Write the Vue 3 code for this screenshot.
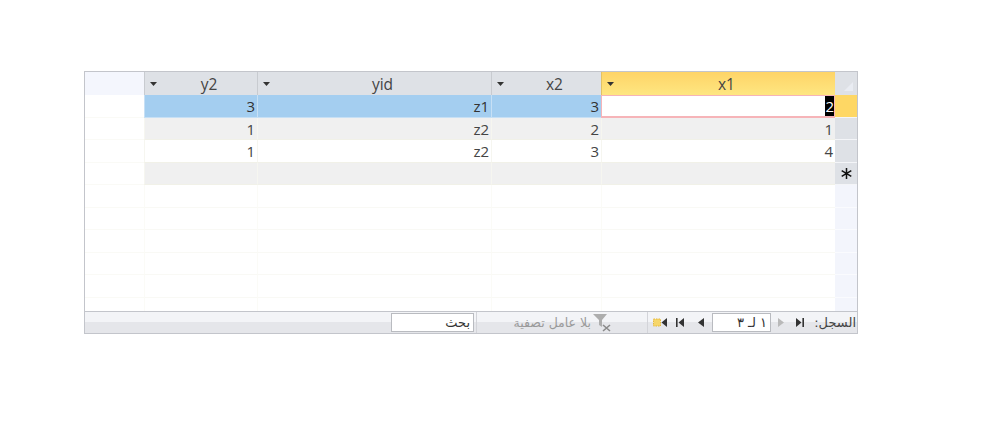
<script setup>
const columns = [
  { key: 'y2', label: 'y2' },
  { key: 'yid', label: 'yid' },
  { key: 'x2', label: 'x2' },
  { key: 'x1', label: 'x1' },
]
const rows = [
  { y2: '3', yid: 'z1', x2: '3', x1: '2', state: 'current' },
  { y2: '1', yid: 'z2', x2: '2', x1: '1', state: 'alt' },
  { y2: '1', yid: 'z2', x2: '3', x1: '4', state: 'plain' },
  { y2: '', yid: '', x2: '', x1: '', state: 'new' },
]
const emptyRows = [1, 2, 3, 4, 5, 6]
</script>

<template>
  <div class="page">
    <div class="sheet">
      <div class="grid">
        <div class="corner"></div>
        <div
          v-for="col in columns"
          :key="col.key"
          class="head"
          :class="{ active: col.key === 'x1' }"
        >
          <svg class="caret" width="7" height="4" viewBox="0 0 7 4"><path d="M0 0h7L3.500 4z" fill="#333" /></svg>
          <span>{{ col.label }}</span>
        </div>
        <div class="head sel-head">
          <svg width="9" height="9" viewBox="0 0 9 9"><path d="M9 0v9H0z" fill="#e9ecf2" /></svg>
        </div>

        <template v-for="(row, i) in rows" :key="i">
          <div class="blank"></div>
          <div
            v-for="col in columns"
            :key="col.key"
            class="cell"
            :class="[row.state, { editing: row.state === 'current' && col.key === 'x1' }]"
          >
            <mark v-if="row.state === 'current' && col.key === 'x1'">{{ row[col.key] }}</mark>
            <template v-else>{{ row[col.key] }}</template>
          </div>
          <div class="selector" :class="row.state">
            <svg v-if="row.state === 'new'" width="11" height="11" viewBox="0 0 11 11">
              <path d="M5.500 0v11M0.700 2.700l9.600 5.600M10.300 2.700L0.700 8.300" stroke="#111" stroke-width="1.500" fill="none" />
            </svg>
          </div>
        </template>

        <template v-for="r in emptyRows" :key="r">
          <div class="blank"></div>
          <div v-for="col in columns" :key="col.key" class="empty"></div>
          <div class="side"></div>
        </template>
      </div>

      <div class="status">
        <input class="search" dir="rtl" value="بحث" aria-label="بحث" />
        <div class="filter">
          <span class="filter-text">بلا عامل تصفية</span>
          <svg width="20" height="19" viewBox="0 0 20 19">
            <path d="M0 1h14L9 7v7L6 12V7z" fill="#adadad" />
            <path d="M10 12l7 6M17 12l-7 6" stroke="#8a8a8a" stroke-width="1.600" fill="none" />
          </svg>
        </div>
        <div class="nav">
          <svg class="new-icon" width="15" height="9" viewBox="0 0 15 9">
            <rect x="0.500" y="1" width="7" height="7" fill="#f6d66a" stroke="#e6b93a" stroke-dasharray="1.500 1" />
            <path d="M14 0v9L8.500 4.500z" fill="#333" />
          </svg>
          <svg class="ico" width="8" height="9" viewBox="0 0 8 9"><path d="M0 0h1.600v9H0zM8 0v9L2.500 4.500z" fill="#333" /></svg>
          <svg class="ico prev" width="6" height="9" viewBox="0 0 6 9"><path d="M6 0v9L0 4.500z" fill="#333" /></svg>
          <input class="pos" dir="rtl" value="١ لـ ٣" aria-label="١ لـ ٣" />
          <svg class="ico next" width="6" height="9" viewBox="0 0 6 9"><path d="M0 0v9L6 4.500z" fill="#b9b9b9" /></svg>
          <svg class="ico first" width="8" height="9" viewBox="0 0 8 9"><path d="M0 0v9L5.500 4.500zM6.400 0H8v9H6.400z" fill="#333" /></svg>
          <span class="record" dir="rtl">السجل:</span>
        </div>
      </div>
    </div>
  </div>
</template>

<style>
html, body { margin: 0; background: #fff; }
</style>

<style scoped>
.page {
  width: 1000px;
  height: 427px;
  padding: 71px 0 0 84px;
  box-sizing: border-box;
  background: #fff;
  font-family: "Open Sans", Lato, sans-serif;
  overflow: hidden;
}
.sheet {
  width: 774px;
  height: 263px;
  box-sizing: border-box;
  border: 1px solid #c3c5cb;
  display: flex;
  flex-direction: column;
}
.grid {
  flex: 1;
  min-height: 0;
  overflow: hidden;
  display: grid;
  grid-template-columns: 59px 113px 234px 110px 234px 22px;
  grid-template-rows: 23px repeat(10, 22.5px);
  background: #fff;
}
.corner { background: #f4f6fd; }
.head {
  position: relative;
  background: #dee1e6;
  color: #444;
  font-size: 15.500px;
  padding-left: 16px;
  display: flex;
  align-items: center;
  justify-content: center;
  box-sizing: border-box;
  border-left: 1px solid #c8cbd0;
}
.head.active {
  background: linear-gradient(#fed467, #fee681);
  border-left-color: #e2c266;
}
.caret { position: absolute; left: 5px; top: 10px; }
.sel-head {
  border-left: 0;
  align-items: flex-end;
  justify-content: flex-end;
  padding: 0 4px 4px 0;
}
.blank { border-bottom: 1px solid #fafaf6; box-sizing: border-box; }
.cell {
  box-sizing: border-box;
  text-align: right;
  padding: 1px 2px 0 0;
  font-size: 15px;
  line-height: 20px;
  color: #444;
  border-left: 1px solid #f6f6f0;
  border-bottom: 1px solid #f1f1e8;
  background: #fff;
}
.cell.current {
  background: #a4cef0;
  color: #333;
  border-left-color: #c7e0f5;
  border-bottom-color: #c7e0f5;
}
.cell.alt, .cell.new { background: #f0f0f0; }
.cell.editing {
  background: #fff;
  border: 1px solid #f6b4b8;
  border-bottom-width: 2px;
  padding: 0;
}
mark { background: #000; color: #fff; padding: 0; }
.selector {
  box-sizing: border-box;
  background: #dee1e6;
  border-bottom: 1px solid #f4f5f8;
  display: flex;
  align-items: center;
  justify-content: center;
}
.selector.current { background: #fed764; }
.empty {
  box-sizing: border-box;
  border-left: 1px solid #fbfbf7;
  border-bottom: 1px solid #f9f9f5;
}
.side { background: #f3f5fc; border-bottom: 1px solid #fafbfe; }
.status {
  height: 22px;
  flex: none;
  box-sizing: border-box;
  border-top: 1px solid #c3c5cb;
  background: linear-gradient(#f3f4f7 0 50%, #e5e6ea 50% 100%);
  display: flex;
  align-items: center;
  padding-left: 306px;
  font-family: "DejaVu Sans", sans-serif;
}
.search, .pos {
  box-sizing: border-box;
  height: 19px;
  border: 1px solid #b9bbc0;
  background: #fff;
  padding: 0 3px;
  margin: 0;
  outline: 0;
  font-family: "DejaVu Sans", sans-serif;
  font-size: 13px;
  color: #333;
}
.search { width: 83px; }
.filter {
  width: 172px;
  margin-left: 2px;
  height: 21px;
  box-sizing: border-box;
  border-left: 1px solid #d3d4d9;
  border-right: 1px solid #d3d4d9;
  display: flex;
  align-items: center;
  justify-content: flex-end;
  padding-right: 34px;
  gap: 2px;
  font-size: 12.500px;
  color: #9a9a9a;
}
.filter-text { white-space: nowrap; }
.nav {
  display: flex;
  align-items: center;
  padding-left: 5px;
  font-size: 13px;
  color: #444;
}
.new-icon { margin-right: 8px; }
.prev { margin: 0 8px 0 14px; }
.pos { width: 59px; }
.next { margin: 0 12px 0 7px; }
.record { white-space: nowrap; width: 52px; text-align: right; }
</style>
